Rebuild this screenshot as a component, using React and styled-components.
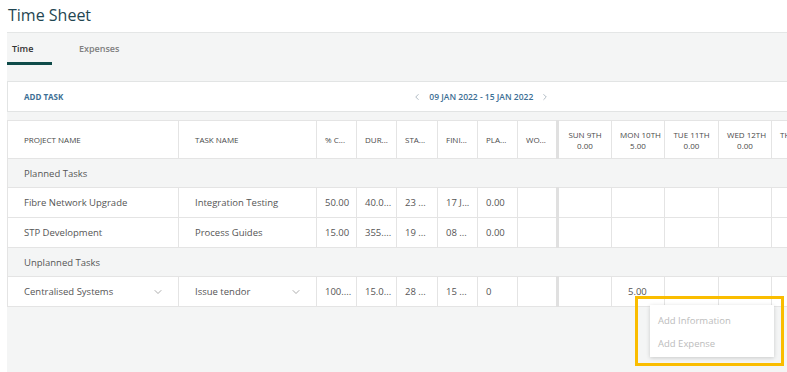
import styled, { createGlobalStyle } from "styled-components";
import { ChevronLeft, ChevronRight, ChevronDown } from "lucide-react";

const GlobalStyle = createGlobalStyle`
  body {
    margin: 0;
    overflow: hidden;
    font-family: "Open Sans", "Noto Sans", sans-serif;
    color: #555;
    background: #fff;
  }
`;

const Page = styled.div`
  position: relative;
  width: 787px;
  height: 372px;
  overflow: hidden;
`;

const Title = styled.h1`
  margin: 0;
  height: 32px;
  padding: 4px 0 0 8px;
  box-sizing: border-box;
  font-size: 16px;
  font-weight: 400;
  color: #1f4652;
`;

const Panel = styled.div`
  margin-left: 7px;
  height: 340px;
  background: #f4f5f5;
  border-top: 1px solid #e4e6e6;
  box-sizing: border-box;
`;

const Tabs = styled.div`
  display: flex;
  height: 32px;
`;

const Tab = styled.div`
  display: flex;
  align-items: center;
  height: 100%;
  box-sizing: border-box;
  padding: 2px 0 0 ${(p) => (p.$active ? "5px" : "27px")};
  width: ${(p) => (p.$active ? "45px" : "auto")};
  font-size: 9px;
  font-weight: 600;
  color: ${(p) => (p.$active ? "#333" : "#808080")};
  border-bottom: 3px solid ${(p) => (p.$active ? "#0f4b49" : "transparent")};
`;

const Toolbar = styled.div`
  display: flex;
  align-items: center;
  margin-top: 16px;
  height: 31px;
  background: #fff;
  border: 1px solid #e2e4e4;
  border-right: none;
  box-sizing: border-box;
  padding-left: 16px;
`;

const ToolLink = styled.span`
  font-size: 8px;
  font-weight: 700;
  color: #3d6f95;
`;

const DateNav = styled.div`
  display: flex;
  align-items: center;
  gap: 7px;
  margin-left: 349px;
  font-size: 8.5px;
  font-weight: 600;
  color: #3d6f95;
  svg {
    color: #8a99a6;
  }
`;

const TableWrap = styled.div`
  margin-top: 8px;
  background: #fff;
  width: 900px;
`;

const Table = styled.table`
  border-collapse: collapse;
  table-layout: fixed;
  width: 900px;
`;

const HeadCell = styled.th`
  height: 38px;
  padding: 0 ${(p) => (p.$wide ? "16px" : "8px")};
  box-sizing: border-box;
  border: 1px solid #e4e4e4;
  border-left: ${(p) => (p.$split ? "3px solid #e0e0e0" : "1px solid #e4e4e4")};
  font-size: 8px;
  font-weight: 400;
  color: #4a4a4a;
  text-align: ${(p) => (p.$center ? "center" : "left")};
  white-space: nowrap;
  overflow: hidden;
  line-height: 11px;
`;

const GroupRow = styled.td`
  height: 29px;
  padding: 0 16px;
  box-sizing: border-box;
  background: #f4f5f5;
  border: 1px solid #e4e4e4;
  font-size: 9.5px;
  color: #555;
`;

const Cell = styled.td`
  height: 30px;
  padding: 0 ${(p) => (p.$wide ? "16px" : "8px")};
  box-sizing: border-box;
  border: 1px solid #e4e4e4;
  border-left: ${(p) => (p.$split ? "3px solid #e0e0e0" : "1px solid #e4e4e4")};
  font-size: 9.5px;
  color: #555;
  white-space: nowrap;
  overflow: hidden;
  text-overflow: clip;
`;

const SelectBox = styled.div`
  display: flex;
  align-items: center;
  justify-content: space-between;
  svg {
    color: #8a8a8a;
    margin-right: -2px;
  }
`;

const Menu = styled.div`
  position: absolute;
  left: 650px;
  top: 305px;
  width: 124px;
  height: 52px;
  background: #fff;
  box-shadow: 0 1px 4px rgba(0, 0, 0, 0.18);
  display: flex;
  flex-direction: column;
  padding: 9px 0 0 8px;
  box-sizing: border-box;
  gap: 10px;
`;

const MenuItem = styled.div`
  font-size: 9.5px;
  color: #bcbcbc;
  line-height: 13px;
`;

const Highlight = styled.div`
  position: absolute;
  left: 635px;
  top: 296px;
  width: 149px;
  height: 70px;
  border: 3.5px solid #fabd00;
  box-sizing: border-box;
  pointer-events: none;
`;

const fixed = [
  { key: "project", label: "PROJECT NAME", w: 171, wide: true },
  { key: "task", label: "TASK NAME", w: 138, wide: true },
  { key: "pc", label: "% C...", w: 40 },
  { key: "dur", label: "DUR...", w: 40 },
  { key: "sta", label: "STA...", w: 41 },
  { key: "fin", label: "FINI...", w: 40 },
  { key: "pla", label: "PLA...", w: 40 },
  { key: "wo", label: "WO...", w: 40 },
];

const days = [
  { day: "SUN 9TH", total: "0.00", w: 54 },
  { day: "MON 10TH", total: "5.00", w: 53 },
  { day: "TUE 11TH", total: "0.00", w: 54 },
  { day: "WED 12TH", total: "0.00", w: 53 },
  { day: "THU 13TH", total: "0.00", w: 53 },
  { day: "FRI 14TH", total: "0.00", w: 53 },
  { day: "SAT 15TH", total: "0.00", w: 53 },
];

const planned = [
  ["Fibre Network Upgrade", "Integration Testing", "50.00", "40.0...", "23 ...", "17 J...", "0.00", ""],
  ["STP Development", "Process Guides", "15.00", "355....", "19 ...", "08 ...", "0.00", ""],
];

const unplanned = [
  {
    cells: ["Centralised Systems", "Issue tendor", "100....", "15.0...", "28 ...", "15 ...", "0", ""],
    hours: ["", "5.00", "", "", "", "", ""],
  },
];

function DataRow({ cells, hours = [], select }) {
  return (
    <tr>
      {cells.map((c, i) => (
        <Cell key={i} $wide={i < 2}>
          {select && i < 2 ? (
            <SelectBox>
              {c}
              <ChevronDown size={12} strokeWidth={1.4} />
            </SelectBox>
          ) : (
            c
          )}
        </Cell>
      ))}
      {days.map((d, i) => (
        <Cell key={d.day} $split={i === 0} $wide>
          {hours[i] || ""}
        </Cell>
      ))}
    </tr>
  );
}

export default function App() {
  const colSpan = fixed.length + days.length;
  return (
    <Page>
      <GlobalStyle />
      <Title>Time Sheet</Title>
      <Panel>
        <Tabs>
          <Tab $active>Time</Tab>
          <Tab>Expenses</Tab>
        </Tabs>
        <Toolbar>
          <ToolLink>ADD TASK</ToolLink>
          <DateNav>
            <ChevronLeft size={10} strokeWidth={1.6} />
            <span>09 JAN 2022 - 15 JAN 2022</span>
            <ChevronRight size={10} strokeWidth={1.6} />
          </DateNav>
        </Toolbar>
        <TableWrap>
          <Table>
            <colgroup>
              {fixed.map((c) => (
                <col key={c.key} style={{ width: c.w }} />
              ))}
              {days.map((d) => (
                <col key={d.day} style={{ width: d.w }} />
              ))}
            </colgroup>
            <thead>
              <tr>
                {fixed.map((c) => (
                  <HeadCell key={c.key} $wide={c.wide}>
                    {c.label}
                  </HeadCell>
                ))}
                {days.map((d, i) => (
                  <HeadCell key={d.day} $center $split={i === 0}>
                    {d.day}
                    <br />
                    {d.total}
                  </HeadCell>
                ))}
              </tr>
            </thead>
            <tbody>
              <tr>
                <GroupRow colSpan={colSpan}>Planned Tasks</GroupRow>
              </tr>
              {planned.map((r, i) => (
                <DataRow key={i} cells={r} />
              ))}
              <tr>
                <GroupRow colSpan={colSpan}>Unplanned Tasks</GroupRow>
              </tr>
              {unplanned.map((r, i) => (
                <DataRow key={i} cells={r.cells} hours={r.hours} select />
              ))}
            </tbody>
          </Table>
        </TableWrap>
      </Panel>
      <Menu>
        <MenuItem>Add Information</MenuItem>
        <MenuItem>Add Expense</MenuItem>
      </Menu>
      <Highlight />
    </Page>
  );
}
